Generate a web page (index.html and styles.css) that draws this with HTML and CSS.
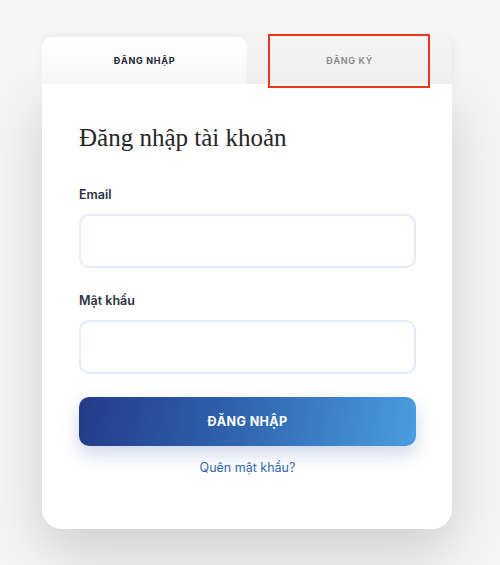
FILE: index.html
```html
<!DOCTYPE html>
<html lang="vi">
<head>
<meta charset="utf-8">
<title>Đăng nhập</title>
<link rel="stylesheet" href="styles.css">
</head>
<body>
<div class="wrap">
  <div class="tabs">
    <div class="tab tab-active">ĐĂNG NHẬP</div>
    <div class="tab tab-other">ĐĂNG KÝ</div>
  </div>
  <div class="card">
    <h1 class="title">Đăng nhập tài khoản</h1>
    <form class="form">
      <label class="label" for="email">Email</label>
      <input class="input" id="email" type="email">
      <label class="label label-gap" for="pw">Mật khẩu</label>
      <input class="input" id="pw" type="password">
      <button class="btn" type="button">ĐĂNG NHẬP</button>
      <a class="forgot" href="#">Quên mật khẩu?</a>
    </form>
  </div>
</div>
</body>
</html>
```
FILE: styles.css
```css
* { box-sizing: border-box; }
html, body { margin: 0; padding: 0; }
body {
  background: #f5f5f5;
  font-family: Inter, "Noto Sans", "Liberation Sans", sans-serif;
  width: 500px;
  height: 565px;
  overflow: hidden;
}
.wrap {
  width: 410px;
  margin-left: 42px;
  padding-top: 37px;
}
.tabs {
  display: flex;
  height: 47px;
}
.tab {
  flex: 1;
  display: flex;
  align-items: center;
  justify-content: center;
  font-size: 9px;
  font-weight: 700;
  letter-spacing: 0.7px;
}
.tab-active {
  background: linear-gradient(#ffffff, #f6f6f7);
  color: #222634;
  border-radius: 10px 10px 0 0;
  box-shadow: 0 -2px 10px rgba(0, 0, 0, 0.03);
}
.tab-other {
  position: relative;
  background: linear-gradient(#f5f5f5, #eeeeef);
  color: #858585;
  font-weight: 600;
  border-radius: 10px 10px 0 0;
  box-shadow: 3px 0 8px rgba(0, 0, 0, 0.04);
}
.tab-other::after {
  content: "";
  position: absolute;
  left: 21px;
  top: -3px;
  width: 158px;
  height: 50px;
  border: 2px solid #e8391f;
  z-index: 2;
}
.card {
  background: #ffffff;
  border-radius: 0 0 20px 20px;
  padding: 39px 36px 53px 37px;
  box-shadow: 0 22px 55px rgba(0, 0, 0, 0.16);
}
.title {
  margin: 0 0 34px;
  font-family: "Liberation Serif", "Times New Roman", serif;
  font-weight: 400;
  font-size: 25px;
  line-height: 30px;
  color: #262626;
}
.form {
  display: flex;
  flex-direction: column;
}
.label {
  font-size: 12.5px;
  line-height: 16px;
  font-weight: 600;
  color: #2b3241;
  margin-bottom: 11px;
}
.label-gap { margin-top: 25px; }
.input {
  height: 54px;
  border: 2px solid #e3ebf8;
  border-radius: 10px;
  background: #ffffff;
  outline: none;
}
.btn {
  margin-top: 23px;
  height: 49px;
  border: none;
  border-radius: 10px;
  background: linear-gradient(100deg, #233b89 0%, #2f62ab 45%, #4a9de0 100%);
  color: #ffffff;
  font-family: inherit;
  font-size: 12.5px;
  font-weight: 700;
  letter-spacing: 0.4px;
  box-shadow: 0 8px 18px rgba(40, 70, 160, 0.22);
}
.forgot {
  margin-top: 14px;
  text-align: center;
  font-size: 12.5px;
  line-height: 16px;
  color: #2f68ab;
  text-decoration: none;
}
```
